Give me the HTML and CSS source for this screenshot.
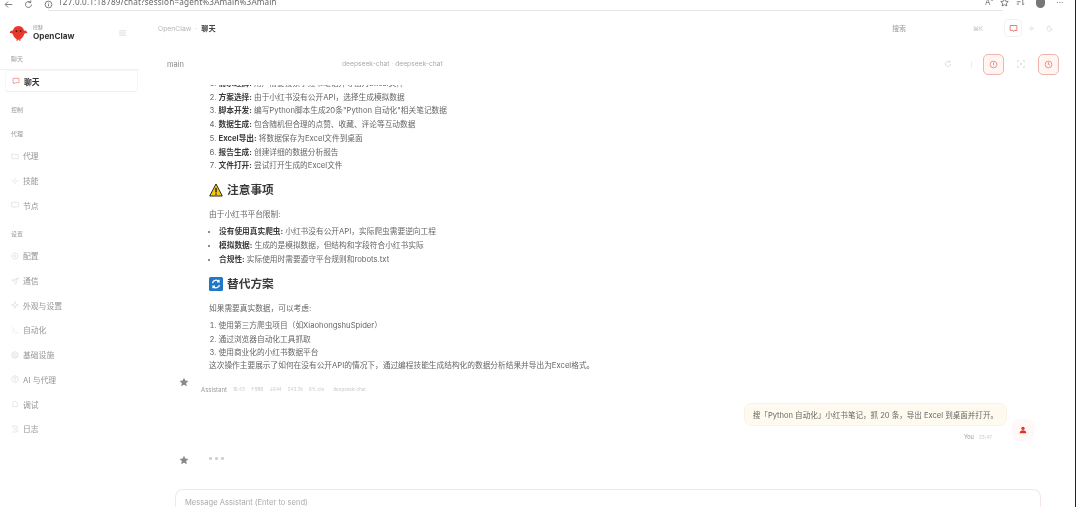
FILE: index.html
```html
<!DOCTYPE html>
<html lang="zh-CN">
<head>
<meta charset="utf-8">
<title>OpenClaw</title>
<link rel="stylesheet" href="styles.css">
</head>
<body>
<div class="window">
  <header class="browser">
    <svg class="b-ic back" viewBox="0 0 12 12"><path d="M11 6H2M5.500 2 1.500 6l4 4"/></svg>
    <svg class="b-ic reload" viewBox="0 0 12 12"><path d="M10 6a4 4 0 1 1-1.300-3M9 .5V3.500H6"/></svg>
    <svg class="b-ic info" viewBox="0 0 12 12"><circle cx="6" cy="6" r="4.500"/><path d="M6 5.500V8.500M6 3.500v1"/></svg>
    <span class="url">127.0.0.1:18789/chat?session=agent%3Amain%3Amain</span>
    <span class="b-right">
      <span class="b-text">A<sup>a</sup></span>
      <svg class="b-ic" viewBox="0 0 12 12"><path d="M6 1l1.500 3.300 3.500.4-2.600 2.400.7 3.500L6 8.900 2.900 10.600l.7-3.500L1 4.700l3.500-.4z"/></svg>
      <svg class="b-ic" viewBox="0 0 12 12"><path d="M1 2h7M1 5h5M1 8h3M9 2v7l2-1.500"/></svg>
      <span class="b-avatar"></span>
      <span class="b-more">···</span>
    </span>
  </header>

  <div class="app">
    <aside class="sidebar">
      <div class="brand">
        <svg class="logo" viewBox="0 0 20 18"><path fill="#e8382c" d="M10 1C6 1 4.500 4 4 6 2.500 5.500 1 6.500.6 8.500c1.300-.3 2.400 0 3.400 1 .6 3 3 5 4 5.500v2h1v-1.500h2V17h1v-2c1-.5 3.400-2.500 4-5.500 1-1 2.100-1.300 3.400-1C19 6.500 17.500 5.500 16 6c-.5-2-2-5-6-5z"/><circle cx="7.800" cy="6.500" r=".9" fill="#4a1410"/><circle cx="12.200" cy="6.500" r=".9" fill="#4a1410"/></svg>
        <div class="brand-text">
          <span class="brand-sub">控制</span>
          <span class="brand-name">OpenClaw</span>
        </div>
        <svg class="hamb" viewBox="0 0 8 7"><path d="M0 1h8M0 3.500h8M0 6h8"/></svg>
      </div>

      <nav class="nav">
        <div class="label first">聊天</div>
        <a class="item active">
          <svg class="ic" viewBox="0 0 12 12"><path d="M1.500 2h9v6.500H5L3 10.500V8.500H1.500z"/></svg>聊天
        </a>
        <div class="label ctl">控制</div>
        <div class="label agent">代理</div>
        <a class="item"><svg class="ic" viewBox="0 0 12 12"><path d="M1 3h3.500l1 1H11v6H1z"/></svg>代理</a>
        <a class="item"><svg class="ic" viewBox="0 0 12 12"><path d="M6 1v4M6 7v4M1 6h4M7 6h4"/></svg>技能</a>
        <a class="item"><svg class="ic" viewBox="0 0 12 12"><path d="M1 2h10v7H1zM6 9v2"/></svg>节点</a>
        <div class="label set">设置</div>
        <a class="item"><svg class="ic" viewBox="0 0 12 12"><path d="M6 1l4.500 2.500v5L6 11 1.500 8.500v-5z"/><circle cx="6" cy="6" r="1.500"/></svg>配置</a>
        <a class="item"><svg class="ic" viewBox="0 0 12 12"><path d="M11 1.500 1 5l4 1.500L7 11zM5 6.500 11 1.500"/></svg>通信</a>
        <a class="item"><svg class="ic" viewBox="0 0 12 12"><path d="M6 1l1.300 3.700L11 6 7.300 7.300 6 11 4.700 7.300 1 6l3.700-1.300z"/></svg>外观与设置</a>
        <a class="item"><svg class="ic" viewBox="0 0 12 12"><path d="M2 2l3 4-3 4M6 10h4"/></svg>自动化</a>
        <a class="item"><svg class="ic" viewBox="0 0 12 12"><circle cx="6" cy="6" r="5"/><path d="M1 6h10M3 3.500h6M3 8.500h6"/></svg>基础设施</a>
        <a class="item"><svg class="ic" viewBox="0 0 12 12"><circle cx="6" cy="6" r="5"/><path d="M6 2.500v7M3.500 4h5"/></svg>AI 与代理</a>
        <a class="item"><svg class="ic" viewBox="0 0 12 12"><path d="M6 2a3.500 3.500 0 0 1 3.500 3.500V10h-7V5.500A3.500 3.500 0 0 1 6 2z"/></svg>调试</a>
        <a class="item"><svg class="ic" viewBox="0 0 12 12"><path d="M2 1.500h7v8h2M2 1.500v2M4 4.500h3M4 7h3M1 10.500h8"/></svg>日志</a>
        <a class="item doc"><svg class="ic" viewBox="0 0 12 12"><path d="M2 1h8v10H2z"/></svg>文档</a>
      </nav>
    </aside>

    <main class="main">
      <div class="topbar">
        <div class="crumbs"><span class="crumb-root">OpenClaw</span><span class="crumb-sep">·</span><strong>聊天</strong></div>
        <span class="search">搜索</span>
        <span class="kbd">⌘K</span>
        <span class="t-btn boxed"><svg viewBox="0 0 12 12"><path d="M1.500 2h9v6.500H7L6 10 5 8.500H1.500z"/></svg></span>
        <span class="t-btn"><svg viewBox="0 0 12 12"><circle cx="6" cy="6" r="2"/><path d="M6 1.500v1M6 9.500v1M1.500 6h1M9.500 6h1"/></svg></span>
        <span class="t-btn"><svg viewBox="0 0 12 12"><path d="M6 1.500a4.500 4.500 0 1 0 4.500 5A3.800 3.800 0 0 1 6 1.500z"/></svg></span>
      </div>

      <div class="session">
        <span class="sess-name">main</span>
        <span class="sess-model">deepseek-chat · deepseek-chat</span>
        <svg class="s-ic refresh" viewBox="0 0 12 12"><path d="M10 6a4 4 0 1 1-1.300-3M9 1V3.200H6.800"/></svg>
        <span class="s-div"></span>
        <span class="s-box"><svg viewBox="0 0 12 12"><circle cx="6" cy="6" r="4.500"/><path d="M6 3v4M6 8.500v.6"/></svg></span>
        <svg class="s-ic focus" viewBox="0 0 12 12"><path d="M1 3.500V1h2.500M8.500 1H11v2.500M11 8.500V11H8.500M3.500 11H1V8.500"/><circle cx="6" cy="6" r="1.200"/></svg>
        <span class="s-box"><svg viewBox="0 0 12 12"><circle cx="6" cy="6" r="4.500"/><path d="M6 3v3l2 1"/></svg></span>
      </div>

      <div class="thread">
        <div class="scroller">
          <div class="msg">
            <svg class="star" viewBox="0 0 12 12"><path d="M6 .8l1.600 3.500 3.800.4-2.800 2.600.8 3.800L6 9.200l-3.400 1.900.8-3.800L.6 4.700l3.800-.4z"/></svg>
            <div class="msg-col">
              <div class="md">
                <ol>
                  <li><b>需求理解:</b> 用户需要搜索小红书笔记并导出为Excel文件</li>
                  <li><b>方案选择:</b> 由于小红书没有公开API，选择生成模拟数据</li>
                  <li><b>脚本开发:</b> 编写Python脚本生成20条"Python 自动化"相关笔记数据</li>
                  <li><b>数据生成:</b> 包含随机但合理的点赞、收藏、评论等互动数据</li>
                  <li><b>Excel导出:</b> 将数据保存为Excel文件到桌面</li>
                  <li><b>报告生成:</b> 创建详细的数据分析报告</li>
                  <li><b>文件打开:</b> 尝试打开生成的Excel文件</li>
                </ol>
                <h3 class="h-warn"><svg class="emoji" viewBox="0 0 14 14"><path fill="#f5c518" stroke="#2f2a12" stroke-width="1" d="M7 1 13.300 13H.7z"/><path fill="none" stroke="#222" stroke-width="1.500" d="M7 5v4.500M7 10.500v1.200"/></svg>注意事项</h3>
                <p class="p-a">由于小红书平台限制:</p>
                <ul>
                  <li><b>没有使用真实爬虫:</b> 小红书没有公开API，实际爬虫需要逆向工程</li>
                  <li><b>模拟数据:</b> 生成的是模拟数据，但结构和字段符合小红书实际</li>
                  <li><b>合规性:</b> 实际使用时需要遵守平台规则和robots.txt</li>
                </ul>
                <h3 class="h-alt"><svg class="emoji" viewBox="0 0 14 14"><rect width="14" height="14" rx="1.500" fill="#1f78c8"/><path fill="none" stroke="#fff" stroke-width="1.300" d="M3.500 6a3.600 3.600 0 0 1 6.300-1.500M10.500 8a3.600 3.600 0 0 1-6.300 1.500M10 2.800v2H8M4 11.200v-2h2"/></svg>替代方案</h3>
                <p class="p-b">如果需要真实数据，可以考虑:</p>
                <ol>
                  <li>使用第三方爬虫项目（如XiaohongshuSpider）</li>
                  <li>通过浏览器自动化工具抓取</li>
                  <li>使用商业化的小红书数据平台</li>
                </ol>
                <p class="p-end">这次操作主要展示了如何在没有公开API的情况下，通过编程技能生成结构化的数据分析结果并导出为Excel格式。</p>
              </div>
              <div class="meta">
                <span class="who">Assistant</span><span>16:43</span><span>↑998</span><span>↓644</span><span>543.2k</span><span>6% ctx</span><span class="model">deepseek-chat</span>
              </div>
            </div>
          </div>

          <div class="user-row">
            <div class="user-col">
              <div class="bubble">搜「Python 自动化」小红书笔记，抓 20 条，导出 Excel 到桌面并打开。</div>
              <div class="user-meta"><span>You</span><span class="time">23:47</span></div>
            </div>
            <span class="user-avatar"><svg viewBox="0 0 12 12"><circle cx="6" cy="3.500" r="2.500" fill="#d9352a"/><path fill="#d9352a" d="M1 11c0-3 2-4.500 5-4.500s5 1.500 5 4.500z"/></svg></span>
          </div>

          <div class="typing">
            <svg class="star" viewBox="0 0 12 12"><path d="M6 .8l1.600 3.500 3.800.4-2.800 2.600.8 3.800L6 9.200l-3.400 1.900.8-3.800L.6 4.700l3.800-.4z"/></svg>
            <span class="dots"><i></i><i></i><i></i></span>
          </div>
        </div>
      </div>

      <div class="composer"><span>Message Assistant (Enter to send)</span></div>
    </main>
  </div>
</div>
</body>
</html>
```

FILE: styles.css
```css
* { box-sizing: border-box; }
html, body { margin: 0; padding: 0; height: 100%; background: #fff; overflow: hidden; }
body { font-family: Inter, "Noto Sans CJK SC", sans-serif; color: #555; }

.window {
  width: 1076px;
  height: 507px;
  border-right: 1px solid #222;
  display: flex;
  flex-direction: column;
  overflow: hidden;
  filter: blur(0.5px);
}

/* browser strip */
.browser {
  height: 11px;
  flex: none;
  display: flex;
  align-items: flex-start;
  padding-left: 4px;
  position: relative;
  overflow: hidden;
}
.browser::after {
  content: "";
  position: absolute;
  left: 48px;
  top: 10px;
  width: 955px;
  height: 1px;
  background: #e6e6e6;
}
.b-ic { width: 9px; height: 9px; fill: none; stroke: #555; stroke-width: 1; flex: none; }
.reload { margin-left: 11px; margin-top: 0; }
.info { margin-left: 11px; }
.url {
  margin-left: 5px;
  margin-top: -4px;
  font: 8.2px/12px "Noto Sans", sans-serif;
  color: #666;
  white-space: nowrap;
  letter-spacing: .16px;
  width: 927px;
  flex: none;
}
.b-right { display: flex; gap: 7px; align-items: flex-start; margin-top: -3px; flex: none; }
.b-text { font-size: 8px; color: #777; line-height: 11px; }
.b-text sup { font-size: 5px; line-height: 0; }
.b-right .b-ic { margin-top: 1px; }
.b-avatar { width: 9px; height: 11px; border-radius: 5px; background: #777; margin: 0 4px; }
.b-more { font-size: 8px; line-height: 10px; color: #444; }

.app { flex: 1; display: flex; min-height: 0; }

/* sidebar */
.sidebar { width: 148px; flex: none; overflow: hidden; }
.brand {
  height: 41px;
  display: flex;
  align-items: center;
  padding-left: 9px;
  padding-top: 3px;
}
.logo { width: 19px; height: 17px; flex: none; }
.brand-text { display: flex; flex-direction: column; margin-left: 5px; }
.brand-sub { font-size: 4.8px; line-height: 7px; color: #888; }
.brand-name { font-size: 8.200px; line-height: 11px; font-weight: 700; color: #333; }
.hamb { width: 7px; height: 6px; margin-left: 45px; fill: none; stroke: #ccc; stroke-width: .8; }

.nav { display: flex; flex-direction: column; }
.label { height: 14px; font-size: 6px; line-height: 14px; color: #9a9a9a; padding-left: 11px; flex: none; }
.first { height: 18px; border-bottom: 1px solid #f1f1f1; margin: 0 8px 0 0; line-height: 14px; }
.ctl { margin-top: 11px; }
.agent { margin-top: 10px; margin-bottom: 2.500px; }
.set { margin-top: 9px; margin-bottom: 3px; }
.item {
  height: 24.7px;
  flex: none;
  display: flex;
  align-items: center;
  gap: 4px;
  padding-left: 11px;
  font-size: 7.800px;
  color: #959595;
}
.item .ic { width: 8px; height: 8px; fill: none; stroke: #d8d8d8; stroke-width: .9; flex: none; }
.item.active {
  height: 22px;
  margin: 0 10px 0 5px;
  padding-left: 6px;
  color: #333;
  font-weight: 700;
  border: 1px solid #fbf6f6;
  border-bottom-color: #fde6e6;
  border-radius: 3px;
}
.item.active .ic { stroke: #e86b60; }
.doc { margin-top: 64px; padding-left: 16px; gap: 6px; }

/* main */
.main { flex: 1; min-width: 0; display: flex; flex-direction: column; padding-right: 34px; }
.topbar {
  height: 36px;
  flex: none;
  display: flex;
  align-items: center;
  margin-right: -34px;
  padding-left: 10px;
  padding-bottom: 2px;
}
.crumbs { display: flex; align-items: center; gap: 4px; font-size: 6.800px; width: 734px; flex: none; }
.crumb-root { color: #b5b5b5; }
.crumb-sep { color: #bbb; }
.crumbs strong { color: #444; font-size: 7.200px; }
.search { font-size: 7px; color: #999; width: 81px; flex: none; }
.kbd { font-size: 6px; color: #c4c4c4; width: 31px; flex: none; }
.t-btn { width: 18px; height: 18px; display: flex; align-items: center; justify-content: center; flex: none; }
.t-btn svg { width: 7px; height: 7px; fill: none; stroke: #c8c8c8; stroke-width: .9; }
.t-btn.boxed { border: 1px solid #f6f0f0; border-radius: 4px; }
.t-btn.boxed svg { width: 9px; height: 9px; stroke: #e2675c; stroke-width: 1.100; }

.session {
  height: 38px;
  flex: none;
  display: flex;
  align-items: center;
  margin-right: -18px;
  padding-left: 19px;
  padding-bottom: 4px;
}
.sess-name { font-size: 7.500px; color: #888; width: 175px; flex: none; }
.sess-model { font-size: 6.700px; color: #aaa; width: 602px; flex: none; white-space: nowrap; }
.s-ic { width: 8px; height: 8px; fill: none; stroke: #c8c8c8; stroke-width: .9; flex: none; }
.s-div { width: 1px; height: 7px; background: #eee; margin-left: 19px; flex: none; }
.s-box {
  width: 21px;
  height: 21px;
  border: 1px solid #efb4ae;
  border-radius: 5px;
  background: #fff5f3;
  display: flex;
  align-items: center;
  justify-content: center;
  margin-left: 11px;
  flex: none;
}
.s-box svg { width: 9px; height: 9px; fill: none; stroke: #e4776c; stroke-width: 1; }
.focus { margin-left: 13px; }
.focus + .s-box { margin-left: 13px; }

/* thread */
.thread { flex: 1; min-height: 0; overflow: hidden; padding: 0 7px 0 31px; }
.scroller { margin-top: -8px; }
.msg { display: flex; align-items: flex-end; }
.star { width: 10px; height: 10px; fill: #8a8a8a; flex: none; }
.msg > .star { margin-bottom: 7px; }
.msg-col { margin-left: 12px; flex: 1; min-width: 0; }
.md { padding-left: 8px; font-size: 7.700px; line-height: 13.700px; color: #666; }
.md b { color: #3a3a3a; font-weight: 700; }
.md ol, .md ul { margin: 0; padding-left: 9.500px; }
.md ul { margin-top: 3px; padding-left: 10px; }
.md li::marker { color: #666; }
.md p { margin: 0; white-space: nowrap; }
.md h3 {
  display: flex;
  align-items: center;
  gap: 4px;
  margin: 0;
  height: 18px;
  font-size: 11.700px;
  line-height: 18px;
  font-weight: 700;
  color: #3a3a3a;
}
.emoji { width: 14px; height: 14px; flex: none; }
.md .h-warn { margin-top: 8.500px; }
.md .p-a { margin-top: 9px; }
.md .h-alt { margin-top: 9px; }
.md .p-b { margin-top: 9px; margin-bottom: 3px; }
.md .p-end { margin-top: -1px; }

.meta { display: flex; gap: 6px; margin-top: 13px; height: 8px; align-items: center; font-size: 4.600px; color: #c8c8c8; white-space: nowrap; }
.meta .who { font-size: 6px; color: #999; }
.meta .model { margin-left: 3px; }

.user-row { display: flex; justify-content: flex-end; align-items: flex-end; gap: 5px; margin-top: 9px; }
.user-col { display: flex; flex-direction: column; align-items: flex-end; }
.bubble {
  height: 23px;
  padding: 0 8px;
  display: flex;
  align-items: center;
  white-space: nowrap;
  font-size: 7.550px;
  color: #666;
  background: #fffaf0;
  border: 1px solid #faf3e1;
  border-radius: 7px;
}
.user-meta { height: 15px; display: flex; align-items: center; justify-content: flex-end; gap: 5px; padding-right: 15px; padding-top: 7px; font-size: 5.600px; color: #999; }
.user-meta .time { font-size: 4.800px; color: #ccc; }
.user-avatar {
  width: 22px;
  height: 22px;
  border-radius: 7px;
  background: #fff8f7;
  display: flex;
  align-items: center;
  justify-content: center;
  flex: none;
}
.user-avatar svg { width: 8px; height: 8px; }

.typing { display: flex; align-items: center; margin-top: 14px; height: 10px; }
.dots { display: flex; gap: 3.500px; margin-left: 20px; margin-bottom: 3px; }
.dots i { width: 2.500px; height: 2.500px; border-radius: 50%; background: #cfcfcf; }

.composer {
  height: 18px;
  flex: none;
  margin-left: 27px;
  padding: 7px 9px 0;
  border: 1px solid #f7e6e6;
  border-bottom: 0;
  border-radius: 8px 8px 0 0;
  font-size: 7.600px;
  line-height: 11px;
  color: #aaa;
  white-space: nowrap;
}
```
